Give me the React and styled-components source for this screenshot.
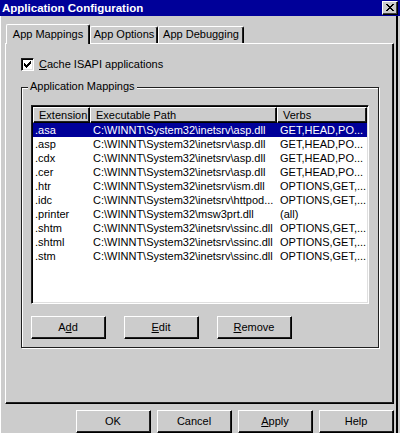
import React from "react";
import styled, { createGlobalStyle } from "styled-components";

const GlobalStyle = createGlobalStyle`
  html, body {
    margin: 0;
    padding: 0;
    background: #cccccc;
  }
  body {
    font-family: "Liberation Sans", Arial, sans-serif;
    font-size: 11px;
    color: #000;
  }
  * { box-sizing: border-box; }
`;

const NAVY = "#000099";
const FACE = "#cccccc";

const Window = styled.div`
  width: 400px;
  height: 433px;
  overflow: hidden;
  background: ${FACE};
  display: flex;
  flex-direction: column;
`;

const TitleBar = styled.div`
  height: 16px;
  flex: none;
  background: ${NAVY};
  display: flex;
  align-items: center;
  justify-content: space-between;
  padding: 0 2px 0 2px;
`;

const TitleText = styled.span`
  color: #fff;
  font-weight: bold;
  font-size: 11.5px;
  line-height: 16px;
  white-space: nowrap;
`;

const CloseButton = styled.div`
  width: 16px;
  height: 14px;
  background: ${FACE};
  border-top: 1px solid #fff;
  border-left: 1px solid #fff;
  border-right: 1px solid #000;
  border-bottom: 1px solid #000;
  box-shadow: inset -1px -1px 0 #404040;
  display: flex;
  align-items: center;
  justify-content: center;
  padding: 0 1px 1px 0;
  svg { display: block; }
`;

const Frame = styled.div`
  flex: 1;
  width: 398px;
  border-left: 1px solid #fff;
  border-right: 2px solid #000;
  padding: 8px 2px 0 4px;
  background: ${FACE};
`;

const TabStrip = styled.div`
  height: 19px;
  display: flex;
  align-items: flex-end;
  padding-left: 1px;
`;

const Tab = styled.div`
  position: relative;
  z-index: ${(p) => (p.$active ? 1 : 0)};
  width: ${(p) => p.$w}px;
  height: ${(p) => (p.$active ? 20 : 17)}px;
  margin-bottom: ${(p) => (p.$active ? -1 : 0)}px;
  padding-top: ${(p) => (p.$active ? 3 : 1)}px;
  background: ${FACE};
  border-top: 1px solid #fff;
  border-left: 1px solid #fff;
  border-right: 1px solid #000;
  box-shadow: inset -1px 0 0 #202020;
  border-top-left-radius: 2px;
  border-top-right-radius: 2px;
  text-align: center;
  line-height: 13px;
  white-space: nowrap;
`;

const Panel = styled.div`
  height: 361px;
  border-top: 1px solid #fff;
  border-left: 1px solid #fff;
  border-right: 1px solid #000;
  border-bottom: 1px solid #000;
  box-shadow: inset -1px -1px 0 #202020;
  padding: 14px 0 0 15px;
`;

const CheckRow = styled.label`
  display: flex;
  align-items: center;
  gap: 5px;
  height: 13px;
  line-height: 13px;
`;

const CheckBox = styled.span`
  width: 13px;
  height: 13px;
  flex: none;
  background: #fff;
  border-top: 1px solid #202020;
  border-left: 1px solid #202020;
  border-right: 1px solid #fff;
  border-bottom: 1px solid #fff;
  box-shadow: inset 1px 1px 0 #000, inset -1px -1px 0 #dfdfdf;
  padding: 2px 0 0 2px;
  svg { display: block; }
`;

const GroupBox = styled.div`
  position: relative;
  width: 358px;
  height: 261px;
  margin-top: 16px;
  border: 1px solid #202020;
  box-shadow: 1px 1px 0 #fff, inset 1px 1px 0 #fff;
  padding: 17px 9px 8px 9px;
`;

const GroupLegend = styled.span`
  position: absolute;
  top: -8px;
  left: 6px;
  padding: 0 2px;
  background: ${FACE};
  line-height: 13px;
  white-space: nowrap;
`;

const ListView = styled.div`
  width: 338px;
  height: 199px;
  background: #fff;
  border-top: 1px solid #202020;
  border-left: 1px solid #202020;
  border-right: 1px solid #fff;
  border-bottom: 1px solid #fff;
  box-shadow: inset 1px 1px 0 #000, inset -1px -1px 0 #dfdfdf;
  padding: 1px;
  overflow: hidden;
`;

const COLS = "57px 187px 90px";

const HeaderRow = styled.div`
  display: grid;
  grid-template-columns: ${COLS};
  height: 16px;
`;

const HeaderCell = styled.div`
  height: 16px;
  background: ${FACE};
  border-top: 1px solid #fff;
  border-left: 1px solid #fff;
  border-right: 1px solid #000;
  border-bottom: 1px solid #000;
  box-shadow: inset -1px -1px 0 #202020;
  padding-left: 5px;
  line-height: 14px;
  white-space: nowrap;
  overflow: hidden;
`;

const Row = styled.div`
  display: grid;
  grid-template-columns: ${COLS};
  height: 14px;
  padding-top: 1px;
  line-height: 13px;
  background: ${(p) => (p.$selected ? NAVY : "transparent")};
  color: ${(p) => (p.$selected ? "#fff" : "#000")};
`;

const Cell = styled.div`
  padding-left: ${(p) => p.$pad}px;
  white-space: nowrap;
  overflow: ${(p) => (p.$last ? "visible" : "hidden")};
`;

const ButtonRow = styled.div`
  display: flex;
  gap: ${(p) => p.$gap}px;
  justify-content: ${(p) => (p.$end ? "flex-end" : "flex-start")};
  margin-top: ${(p) => p.$top}px;
`;

const PushButton = styled.button`
  width: 75px;
  height: 23px;
  margin: 0;
  padding: 0 1px 1px 0;
  font: inherit;
  color: #000;
  background: ${FACE};
  border-top: 1px solid #fff;
  border-left: 1px solid #fff;
  border-right: 1px solid #000;
  border-bottom: 1px solid #000;
  box-shadow: inset -1px -1px 0 #202020;
  border-radius: 0;
  line-height: 13px;
  text-align: center;
`;

const Mn = styled.u`
  text-decoration: underline;
  text-decoration-thickness: 1px;
  text-underline-offset: 1px;
`;

const CloseGlyph = () => (
  <svg width="8" height="7" viewBox="0 0 8 7" shapeRendering="crispEdges">
    <path
      fill="#000"
      d="M0 0h2v1H0zM6 0h2v1H6zM1 1h2v1H1zM5 1h2v1H5zM2 2h4v1H2zM3 3h2v1H3zM2 4h4v1H2zM1 5h2v1H1zM5 5h2v1H5zM0 6h2v1H0zM6 6h2v1H6z"
    />
  </svg>
);

const CheckGlyph = () => (
  <svg width="7" height="7" viewBox="0 0 7 7" shapeRendering="crispEdges">
    <path
      fill="#000"
      d="M0 2h1v3H0zM1 3h1v3H1zM2 4h1v3H2zM3 3h1v3H3zM4 2h1v3H4zM5 1h1v3H5zM6 0h1v3H6z"
    />
  </svg>
);

const ASP = "C:\\WINNT\\System32\\inetsrv\\asp.dll";
const SSI = "C:\\WINNT\\System32\\inetsrv\\ssinc.dll";
const GHP = "GET,HEAD,PO...";
const OPT = "OPTIONS,GET,...";

const rows = [
  [".asa", ASP, GHP],
  [".asp", ASP, GHP],
  [".cdx", ASP, GHP],
  [".cer", ASP, GHP],
  [".htr", "C:\\WINNT\\System32\\inetsrv\\ism.dll", OPT],
  [".idc", "C:\\WINNT\\System32\\inetsrv\\httpod...", OPT],
  [".printer", "C:\\WINNT\\System32\\msw3prt.dll", "(all)"],
  [".shtm", SSI, OPT],
  [".shtml", SSI, OPT],
  [".stm", SSI, OPT],
];

export default function App() {
  return (
    <>
      <GlobalStyle />
      <Window>
        <TitleBar>
          <TitleText>Application Configuration</TitleText>
          <CloseButton>
            <CloseGlyph />
          </CloseButton>
        </TitleBar>
        <Frame>
          <TabStrip>
            <Tab $active $w={84}>App Mappings</Tab>
            <Tab $w={68}>App Options</Tab>
            <Tab $w={86}>App Debugging</Tab>
          </TabStrip>
          <Panel>
            <CheckRow>
              <CheckBox>
                <CheckGlyph />
              </CheckBox>
              <span>
                <Mn>C</Mn>ache ISAPI applications
              </span>
            </CheckRow>
            <GroupBox>
              <GroupLegend>Application Mappings</GroupLegend>
              <ListView>
                <HeaderRow>
                  <HeaderCell>Extension</HeaderCell>
                  <HeaderCell>Executable Path</HeaderCell>
                  <HeaderCell>Verbs</HeaderCell>
                </HeaderRow>
                {rows.map((r, i) => (
                  <Row key={r[0]} $selected={i === 0}>
                    <Cell $pad={2}>{r[0]}</Cell>
                    <Cell $pad={3}>{r[1]}</Cell>
                    <Cell $pad={3} $last>{r[2]}</Cell>
                  </Row>
                ))}
              </ListView>
              <ButtonRow $gap={18} $top={12}>
                <PushButton>
                  A<Mn>d</Mn>d
                </PushButton>
                <PushButton>
                  <Mn>E</Mn>dit
                </PushButton>
                <PushButton>
                  <Mn>R</Mn>emove
                </PushButton>
              </ButtonRow>
            </GroupBox>
          </Panel>
          <ButtonRow $gap={6} $top={6} $end>
            <PushButton>OK</PushButton>
            <PushButton>Cancel</PushButton>
            <PushButton>
              <Mn>A</Mn>pply
            </PushButton>
            <PushButton>Help</PushButton>
          </ButtonRow>
        </Frame>
      </Window>
    </>
  );
}
